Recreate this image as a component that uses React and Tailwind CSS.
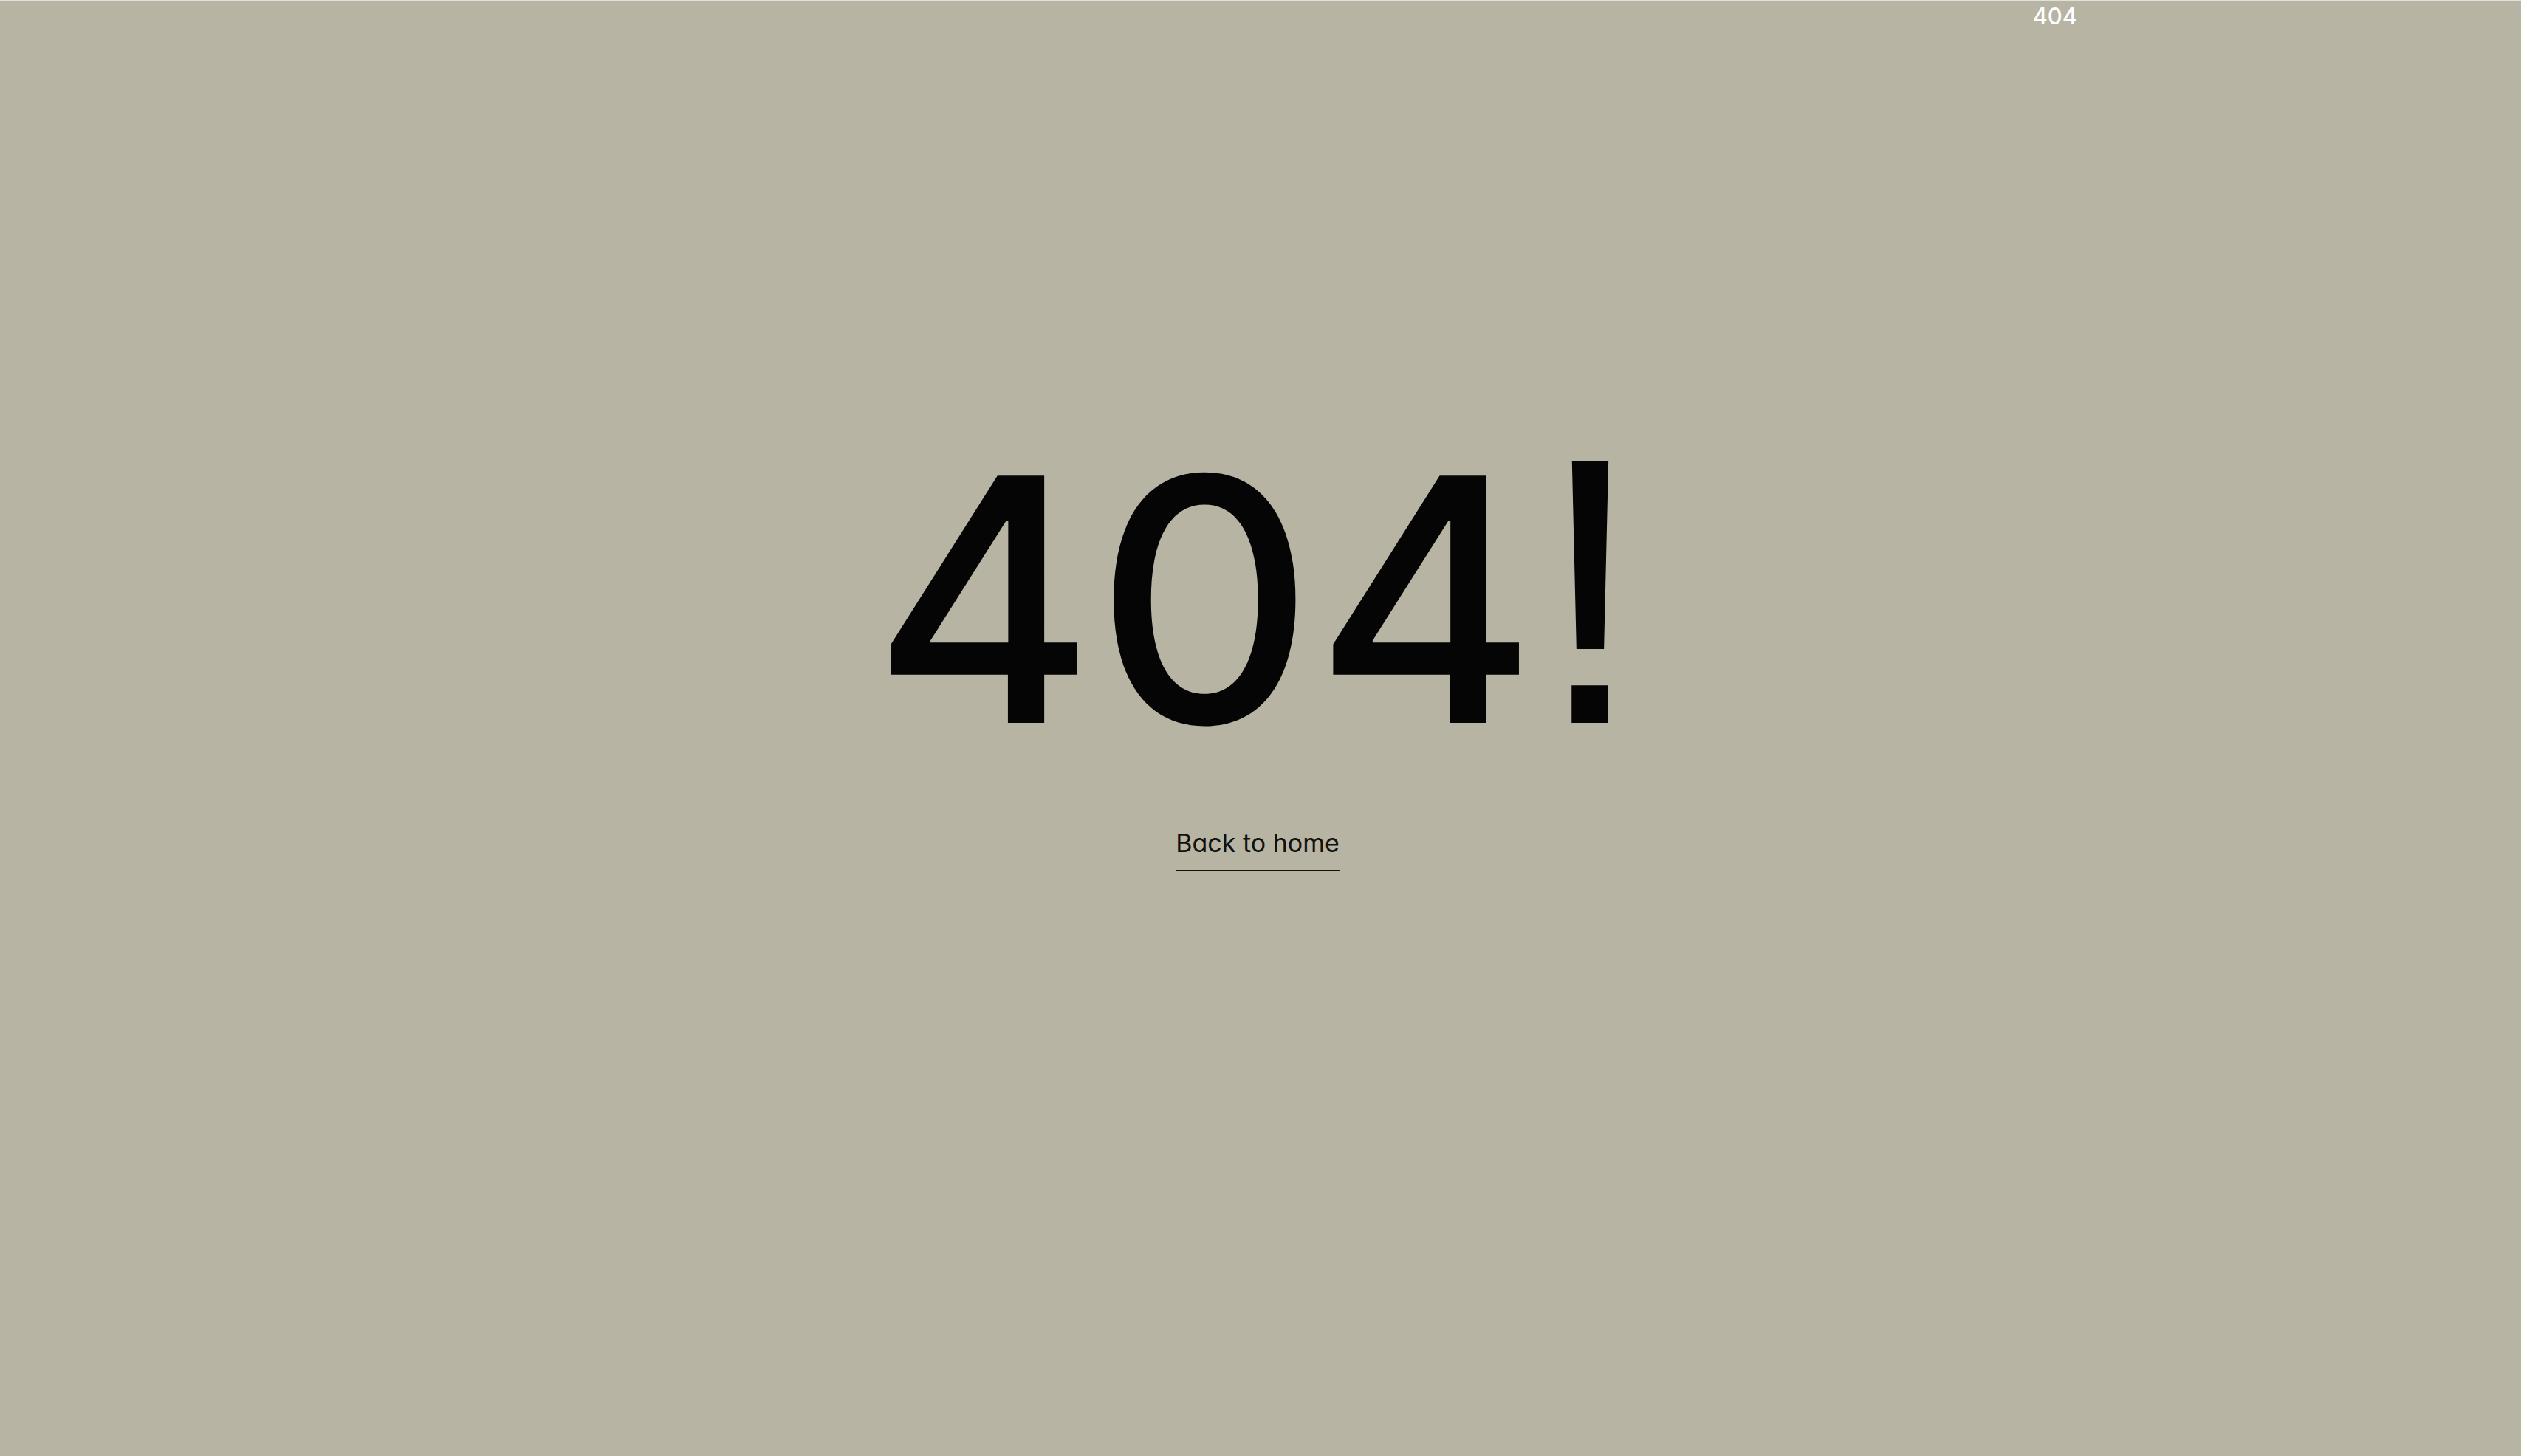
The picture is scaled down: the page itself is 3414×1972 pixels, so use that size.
import React from 'react'

const App = () => {
  return (
    <div className="flex min-h-screen flex-col border-t-2 border-[#e0e0e0] bg-[#b8b4a3] font-['Inter',sans-serif] text-[#050505]">
      <header className="flex justify-end pt-0.5 pr-[17.6%]">
        <span className="text-[31px] leading-9 font-medium text-white">404</span>
      </header>

      <main className="flex flex-col items-center pt-[542px] pr-2">
        <h1 className="flex items-baseline text-[460px] leading-[460px] font-medium">
          404<span className="font-['Liberation_Sans',sans-serif] text-[516px] leading-[400px] font-normal">!</span>
        </h1>
        <a
          href="/"
          className="mt-20 border-b-2 border-current pb-4 text-[34px] leading-10 text-[#11120d] [font-feature-settings:'cv11']"
        >
          Back to home
        </a>
      </main>
    </div>
  )
}

export default App
